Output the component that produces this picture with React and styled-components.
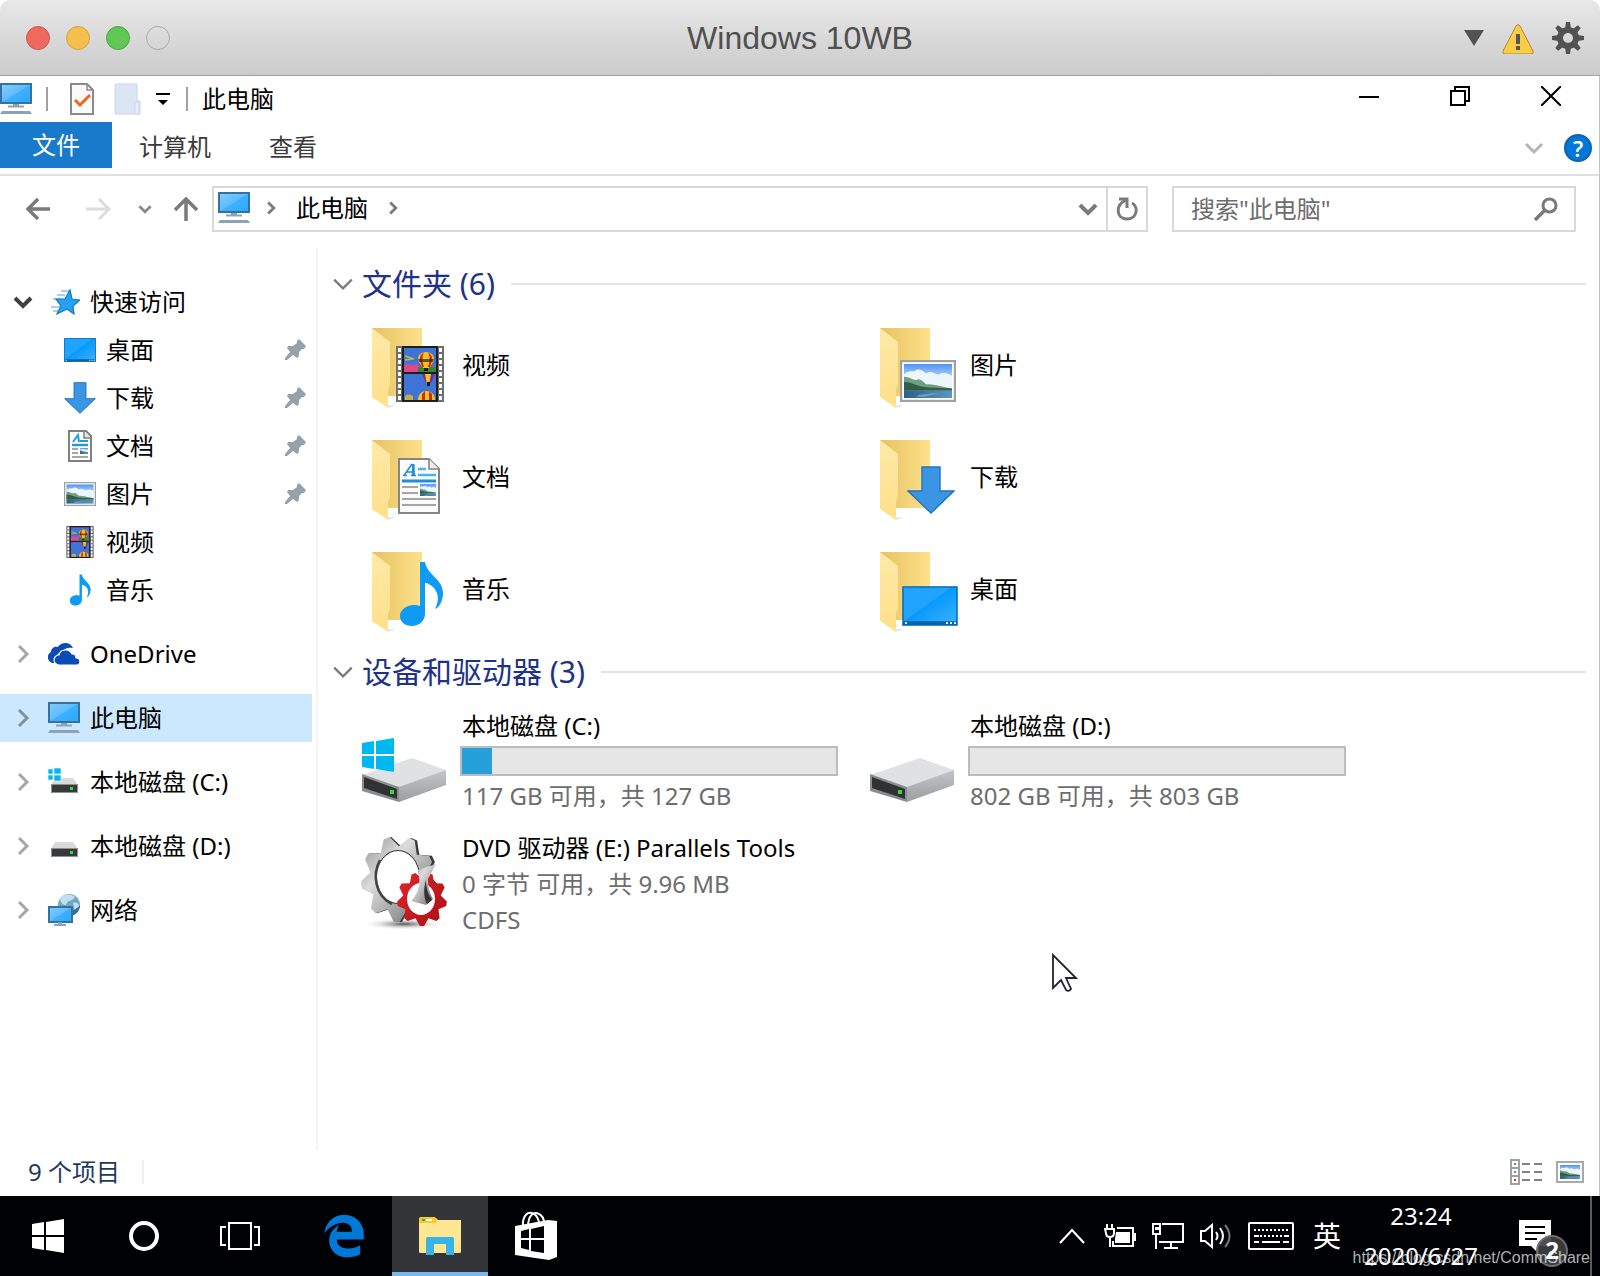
import React from 'react';
import styled, { createGlobalStyle } from 'styled-components';
import { FaEdgeLegacy } from 'react-icons/fa';

const GlobalStyle = createGlobalStyle`
*{
box-sizing:border-box;
}
body{
margin:0;
background:white;
color:#000;
font-family:'Noto Sans','Noto Sans CJK SC',sans-serif;
font-size:24px;
line-height:36px;
}
button,input{
font:inherit;
color:inherit;
}
button{
background:none;
border:none;
padding:0;
}
svg{
display:block;
flex-shrink:0;
}
`;

/* ---------- layout ---------- */
const Screen = styled.div`
display:flex;
flex-direction:column;
min-height:100vh;
`;
const HostBar = styled.header`
display:grid;
grid-template-columns:1fr auto 1fr;
align-items:center;
height:76px;
padding:0 16px;
border-bottom:1px solid #a2a2a2;
border-radius:10px 10px 0 0;
background:linear-gradient(#e8e8e8,#cbcbcb);
`;
const HostTitle = styled.h1`
margin:0;
color:#505050;
font:400 32px/40px 'Liberation Sans',Arial,sans-serif;
`;
const Lights = styled.div`
display:flex;
gap:16px;
padding-left:10px;
`;
const Light = styled.button`
width:24px;
height:24px;
border-radius:50%;
border:1px solid ${(p) => p.$edge};
background:${(p) => p.$fill};
`;
const HostTools = styled.div`
display:flex;
justify-content:flex-end;
align-items:center;
gap:18px;
`;
const Explorer = styled.main`
position:relative;
display:flex;
flex-direction:column;
flex:1;
border-right:1px solid #c3c3c3;
`;
const CaptionBar = styled.div`
display:flex;
height:46px;
padding-right:3px;
`;
const CaptionSeparator = styled.span`
width:2px;
height:24px;
background:#a0a0a0;
`;
const QuickTools = styled.div`
display:flex;
align-items:center;
gap:14px;
flex:1;
`;
const ToolButton = styled.button`
display:flex;
`;
const CaptionButton = styled.button`
display:flex;
justify-content:center;
align-items:center;
width:91px;
height:40px;
`;
const Tabs = styled.nav`
display:flex;
height:54px;
padding-right:7px;
border-bottom:2px solid #dfdfdf;
`;
const Tab = styled.button`
height:46px;
margin-right:${(p) => (p.$active ? '0' : '4px')};
padding:${(p) => (p.$active ? '0 32px' : '4px 27px 0')};
color:${(p) => (p.$active ? 'white' : '#3b3b3b')};
background:${(p) => (p.$active ? '#1979ca' : 'none')};
`;
const TabTools = styled.div`
display:flex;
align-items:center;
gap:20px;
margin-left:auto;
`;
const HelpButton = styled.button`
width:28px;
height:28px;
border:2px solid #0b63b3;
border-radius:50%;
background:#0078d7;
color:white;
font-size:22px;
font-weight:600;
line-height:22px;
`;
const NavRow = styled.div`
display:flex;
align-items:center;
padding:10px 23px 16px 26px;
`;
const Arrows = styled.div`
display:flex;
align-items:center;
gap:22px;
width:186px;
`;
const AddressBar = styled.div`
display:flex;
align-items:center;
flex:1;
height:46px;
border:2px solid #d9d9d9;
`;
const Crumbs = styled.div`
display:flex;
align-items:center;
gap:14px;
flex:1;
padding:0 0 3px 4px;
`;
const Crumb = styled.a`
padding:0 4px;
color:#000;
text-decoration:none;
`;
const RefreshButton = styled.button`
display:flex;
justify-content:center;
align-items:center;
width:40px;
height:42px;
margin-left:8px;
border-left:2px solid #d9d9d9;
`;
const SearchBox = styled.label`
display:flex;
align-items:center;
width:404px;
height:46px;
margin-left:24px;
padding:0 16px 0 17px;
border:2px solid #d9d9d9;
`;
const SearchInput = styled.input`
flex:1;
min-width:0;
padding:0;
border:none;
outline:none;
background:none;
&::placeholder{
color:#6d6d6d;
opacity:1;
}
`;
const Body = styled.div`
display:flex;
flex:1;
`;
const Sidebar = styled.nav`
display:flex;
flex-direction:column;
gap:16px;
width:318px;
flex-shrink:0;
padding-top:30px;
padding-right:4px;
border-right:2px solid #f4f4f4;
`;
const TreeLink = styled.a`
display:flex;
align-items:center;
height:48px;
padding:0 5px 0 ${(p) => (p.$nested ? '64px' : '13px')};
background:${(p) => (p.$selected ? '#cce8ff' : 'none')};
color:#000;
text-decoration:none;
`;
const TreeArrow = styled.span`
display:flex;
justify-content:center;
width:20px;
margin-right:15px;
`;
const TreeLabel = styled.span`
flex:1;
padding-left:10px;
`;
const Content = styled.section`
position:relative;
flex:1;
padding:16px 13px 0 14px;
`;
const GroupTitle = styled.h2`
display:flex;
align-items:center;
gap:16px;
margin:0 0 16px;
font-size:30px;
font-weight:400;
line-height:40px;
color:#1e3287;
&::after{
content:'';
flex:1;
height:2px;
background:#e4e4e4;
}
`;
const GroupToggle = styled.button`
display:flex;
align-items:center;
gap:8px;
`;
const Grid = styled.div`
display:grid;
grid-template-columns:repeat(auto-fill,508px);
gap:16px 0;
margin-bottom:12px;
padding-left:22px;
`;
const Tile = styled.button`
display:flex;
align-items:center;
gap:10px;
text-align:left;
`;
const TileText = styled.span`
display:flex;
flex-direction:column;
`;
const TileName = styled.span`
padding:${(p) => (p.$folder ? '0 0 6px 2px' : '0 0 0 2px')};
`;
const TileInfo = styled.span`
padding-left:2px;
color:#6d6d6d;
`;
const Gauge = styled.span`
width:378px;
height:30px;
margin:2px 0;
border:2px solid #bcbcbc;
background:#e6e6e6;
`;
const GaugeFill = styled.span`
display:block;
height:100%;
background:#26a0da;
`;
const Pointer = styled.div`
position:absolute;
left:734px;
top:705px;
`;
const StatusBar = styled.footer`
display:flex;
justify-content:space-between;
align-items:center;
height:46px;
padding:0 15px 2px 28px;
color:#1f3a5c;
`;
const ItemCount = styled.span`
padding-right:22px;
border-right:2px solid #f0f0f0;
line-height:24px;
`;
const ViewButtons = styled.div`
display:flex;
gap:12px;
`;
const Taskbar = styled.footer`
position:relative;
display:flex;
justify-content:space-between;
height:80px;
background:#000105;
color:white;
`;
const TaskGroup = styled.div`
display:flex;
`;
const TaskButton = styled.button`
display:flex;
justify-content:center;
align-items:center;
width:96px;
margin-left:${(p) => (p.$first ? '8px' : '0')};
background:${(p) => (p.$active ? '#343538' : 'none')};
box-shadow:${(p) => (p.$active ? 'inset 0 -4px #76b9ed' : 'none')};
`;
const TrayButton = styled.button`
display:flex;
justify-content:center;
align-items:center;
width:${(p) => p.$width || 48}px;
font-size:28px;
`;
const NoticeButton = styled(TrayButton)`
padding:16px 0 0 8px;
`;
const Clock = styled.time`
width:138px;
line-height:40px;
text-align:center;
`;
const ShowDesktop = styled.button`
width:10px;
border-left:2px solid #5a5b5e;
`;
const Watermark = styled.a`
position:absolute;
right:10px;
bottom:8px;
color:rgba(255,255,255,.7);
font:16px/20px 'Liberation Sans',Arial,sans-serif;
text-decoration:none;
`;

/* ---------- icons ---------- */
const Chevron = ({ dir = 'down', w = 18, color = '#6d6d6d', stroke = 3 }) => {
  const turn = { down: 0, right: -90, up: 180 }[dir];
  return (
    <svg width={w} height={w} viewBox="0 0 20 20">
      <path d="M2 6l8 8 8-8" fill="none" stroke={color} strokeWidth={stroke} transform={`rotate(${turn} 10 10)`} />
    </svg>
  );
};

const Monitor = () => (
  <svg width="32" height="32" viewBox="0 0 32 32">
    <defs>
      <linearGradient id="screen" x1="0" y1="0" x2="1" y2="1">
        <stop offset="0" stopColor="#86ccff" />
        <stop offset=".5" stopColor="#5cbcff" />
        <stop offset=".5" stopColor="#3fb0ff" />
        <stop offset="1" stopColor="#2ba8fc" />
      </linearGradient>
    </defs>
    <rect x="1" y="1" width="30" height="19" fill="url(#screen)" stroke="#36739c" strokeWidth="2" />
    <path d="M13 21h6v2h-6zM8 22.500h16v2H8z" fill="#8ba3b8" />
    <path d="M2 28h28l2 3H0z" fill="#8fa2b5" />
  </svg>
);

const DesktopArt = (props) => (
  <svg viewBox="0 0 56 42" preserveAspectRatio="none" {...props}>
    <defs>
      <linearGradient id="desk" x1="0" y1="0" x2="1" y2="1">
        <stop offset="0" stopColor="#1fa4ff" />
        <stop offset=".45" stopColor="#1fa4ff" />
        <stop offset=".46" stopColor="#0898fc" />
        <stop offset="1" stopColor="#3cb4ff" />
      </linearGradient>
    </defs>
    <rect x="1" y="1" width="54" height="40" fill="url(#desk)" stroke="#0b6fb8" strokeWidth="1.6" />
    <path d="M1 37h54v4H1z" fill="#0a63a5" />
    <path d="M3 38h2v2H3zM44 38h2v2h-2zM48 38h2v2h-2zM52 38h2v2h-2z" fill="white" />
  </svg>
);

const ArrowArt = (props) => (
  <svg viewBox="0 0 48 48" {...props}>
    <path d="M15 1h18v24h14L24 47 1 25h14z" fill="#3a96e4" stroke="#1f74bd" strokeWidth="1.4" />
  </svg>
);

const LandscapeArt = (props) => (
  <svg viewBox="0 0 46 32" preserveAspectRatio="none" {...props}>
    <defs>
      <linearGradient id="sky" x1="0" y1="0" x2="0" y2="1">
        <stop offset="0" stopColor="#4f92f5" />
        <stop offset=".5" stopColor="#cfe6fb" />
      </linearGradient>
      <linearGradient id="lake" x1="0" y1="0" x2="1" y2="0">
        <stop offset="0" stopColor="#2f5f86" />
        <stop offset="1" stopColor="#5b96c6" />
      </linearGradient>
    </defs>
    <path d="M0 0h46v32H0z" fill="url(#sky)" />
    <path d="M0 10c4-4 8-3 10-3 4-4 9 0 11 2 6-4 8 1 12 1 5-3 9-1 13 1v14H0z" fill="#eef6fd" />
    <path d="M0 12c5 0 8 3 12 3 3-2 6 1 9 4 8 0 14 2 25 4v3H0z" fill="#6f9f7c" />
    <path d="M0 17c8 0 14 5 24 5l22 1v2H0z" fill="#2f6045" />
    <path d="M0 25h46v7H0z" fill="url(#lake)" />
    <path d="M14 29l20-2-14 4h-8z" fill="#86b4d3" opacity=".6" />
  </svg>
);

const PictureArt = (props) => (
  <svg viewBox="0 0 56 42" {...props}>
    <rect x="1" y="1" width="54" height="40" fill="white" stroke="#a0a0a0" strokeWidth="2.400" />
    <LandscapeArt x="4" y="4" width="48" height="34" />
  </svg>
);

const DocumentArt = (props) => (
  <svg viewBox="0 0 42 56" {...props}>
    <path d="M1 1h30l10 10v44H1z" fill="#fbfbfb" stroke="#858585" strokeWidth="2" />
    <path d="M31 1v10h10" fill="#eee" stroke="#858585" strokeWidth="1.6" />
    <path d="M6 17.500L14 6M8 14h8M5 17.500h4M13 17.500h5" fill="none" stroke="#1f8fd8" strokeWidth="1.6" />
    <path d="M14 6h2.500l.5 11.500h-3z" fill="#1f8fd8" />
    <path d="M20 11h8M20 17h18" stroke="#4cb4ea" strokeWidth="2.400" />
    <path d="M4 23h34" stroke="#1f8fd8" strokeWidth="3" />
    <path d="M4 29h16M4 35h16M4 41h34M4 47h34" stroke="#a6a6a6" strokeWidth="2.200" />
    <LandscapeArt x="22" y="26" width="16" height="12" />
  </svg>
);

// simplified page for the 32px tree icon
const SmallDocument = () => (
  <svg width="32" height="32" viewBox="0 0 32 32">
    <path d="M5 1h17l5 5v25H5z" fill="white" stroke="#7f7f7f" strokeWidth="2" />
    <path d="M20 1v7h7" fill="#e6e6e6" stroke="#7f7f7f" strokeWidth="1.500" />
    <path d="M9 12l5-7 1 7M16 11h8" fill="none" stroke="#1f9be0" strokeWidth="2" />
    <path d="M8 15h16" stroke="#1f9be0" strokeWidth="2.400" />
    <path d="M8 19h6M8 23h6M8 27h16" stroke="#a6a6a6" strokeWidth="1.800" />
    <LandscapeArt x="16" y="18" width="8" height="6" />
  </svg>
);

const NoteArt = (props) => (
  <svg viewBox="0 0 44 66" {...props}>
    <path
      d="M21 1h5c2 13 18 17 18 31 0 8-4 15-8 16 3-6 5-14-1-21-3-3-6-5-9-5v31c0 7-6 12-13 12S1 61 1 55s6-11 14-11c3 0 4 0 6 1z"
      fill="#0d9bf5"
    />
  </svg>
);

const Balloon = ({ x, y }) => (
  <g transform={`translate(${x} ${y})`}>
    <path d="M0-8c5 0 8 3 8 7 0 4-4 6-5 9h-6c-1-3-5-5-5-9 0-4 3-7 8-7z" fill="#f3c41f" />
    <path d="M-3-7c-5 4-3 8-1 14h2c-2-6-2-10 0-15zM3-7c5 4 3 8 1 14H2c2-6 2-10 0-15z" fill="#cf2a1c" />
    <path d="M-8-1h16l-1 3H-7z" fill="#2b2320" opacity=".7" />
    <path d="M-2 8h4v3h-4z" fill="#241a12" />
  </g>
);

const FilmArt = (props) => (
  <svg viewBox="0 0 48 56" {...props}>
    <path d="M0 0h48v56H0z" fill="#6f6f6f" />
    <path d="M6 0h36v56H6z" fill="#1c1c1c" />
    {[2, 8, 14, 20, 26, 32, 38, 44, 50].map((y) => (
      <path key={y} d={`M2 ${y}h3v4H2zM43 ${y}h3v4h-3z`} fill="white" />
    ))}
    <path d="M8 2h32v24H8zM8 28h32v26H8z" fill="#3f73d6" />
    <path d="M8 20c4-5 8 1 12-2 4 4 6 1 8 3l12-1v6H8z" fill="#e0468a" />
    <path d="M22 21h18v5H22z" fill="#2f8b3a" />
    <path d="M9 10l9 3M9 14l8-1" stroke="#b9b84e" strokeWidth="1.600" />
    <Balloon x={30} y={14} />
    <path d="M26 28h13l-4 9h-5z" fill="#7c2b9c" />
    <path d="M29 28h6l-2 11h-2z" fill="#f2c21d" />
    <path d="M31 36h3v4h-3z" fill="#1c1c1c" />
    <path d="M22 54c0-12 17-12 17 0z" fill="#f3c41f" />
    <path d="M26 54v-6l3-3v9zM33 54v-9l3 3v6z" fill="#cf2a1c" />
    <path d="M9 50c4-3 6-1 8 0v4H9z" fill="#c2b04a" />
  </svg>
);

const Folder = ({ children }) => (
  <svg width="96" height="96" viewBox="-8 0 96 96">
    <defs>
      <linearGradient id="back" x1="0" y1="0" x2="1" y2="0">
        <stop offset="0" stopColor="#e6c263" />
        <stop offset="1" stopColor="#fde18a" />
      </linearGradient>
      <linearGradient id="flap" x1="0" y1="0" x2="0" y2="1">
        <stop offset="0" stopColor="#ffe9a8" />
        <stop offset="1" stopColor="#ffe08a" />
      </linearGradient>
    </defs>
    <path d="M26 88l6-2v-1h-6z" fill="#e8e8e8" />
    <path d="M10 8h50v68H20z" fill="url(#back)" />
    <path d="M10 8l18 14v43l-2 4v19L10 77z" fill="url(#flap)" />
    {children}
  </svg>
);

const DriveBody = ({ children }) => (
  <svg width="96" height="96" viewBox="0 0 96 96">
    <defs>
      <linearGradient id="side" x1="0" y1="0" x2="0" y2="1">
        <stop offset="0" stopColor="#c4c5c8" />
        <stop offset="1" stopColor="#9c9da0" />
      </linearGradient>
    </defs>
    <path d="M8 62l50-17 34 12-47 18z" fill="#e0e1e5" />
    <path d="M45 74l47-17v15L45 89z" fill="url(#side)" />
    <path d="M8 61l37 13v15L8 78z" fill="#8b8c8e" />
    <path d="M10 64l33 12v10L10 75z" fill="#303132" />
    <path d="M36 77h4v4h-4z" fill="#2be02b" />
    {children}
  </svg>
);

const WinFlag = (props) => (
  <svg viewBox="0 0 32 34" {...props}>
    <path d="M0 5l12-2v13H0zM14 3l18-3v16H14zM0 18h12v13L0 29zM14 18h18v16l-18-3z" fill={props.color} />
  </svg>
);

const SmallDrive = ({ system }) => (
  <svg width="32" height="32" viewBox="0 0 32 32">
    <path d="M7 12h18l5 7H3z" fill="#d9dadd" />
    <path d="M3 18h27v9H3z" fill="#8f9093" />
    <path d="M4 19h25v7H4z" fill="#38393a" />
    <path d="M22 21h3v3h-3z" fill="#2be02b" />
    {system && <path d="M0 3h5v5H0zM6 2h7v6H6zM0 9h5v5H0zM6 9h7v6H6z" fill="#00b8f0" stroke="white" strokeWidth=".6" />}
  </svg>
);

function cog(cx, cy, rx, ry, teeth, offset) {
  const points = [];
  const step = (Math.PI * 2) / teeth;
  for (let i = 0; i < teeth; i++) {
    const a = (offset * Math.PI) / 180 + i * step;
    [[-0.5, 0.76], [-0.12, 1], [0.12, 1]].forEach(([d, k]) => {
      points.push(`${(cx + Math.cos(a + d * step) * rx * k).toFixed(1)} ${(cy + Math.sin(a + d * step) * ry * k).toFixed(1)}`);
    });
  }
  return `M${points.join('L')}z`;
}
const ring = (cx, cy, rx, ry) => `M${cx - rx} ${cy}a${rx} ${ry} 0 1 0 ${rx * 2} 0a${rx} ${ry} 0 1 0 ${-rx * 2} 0z`;

const ParallelsDisc = () => (
  <svg width="96" height="96" viewBox="0 0 96 96">
    <defs>
      <linearGradient id="steel" x1="0" y1="0" x2="1" y2="1">
        <stop offset="0" stopColor="#8e8e8e" />
        <stop offset=".35" stopColor="#dcdcdc" />
        <stop offset=".7" stopColor="#9b9b9b" />
        <stop offset="1" stopColor="#555" />
      </linearGradient>
      <radialGradient id="ground">
        <stop offset="0" stopColor="#555" />
        <stop offset="1" stopColor="#fff" stopOpacity="0" />
      </radialGradient>
      <linearGradient id="red" x1="0" y1="0" x2="1" y2="1">
        <stop offset="0" stopColor="#e2262a" />
        <stop offset="1" stopColor="#a80f14" />
      </linearGradient>
    </defs>
    <ellipse cx="50" cy="88" rx="42" ry="6" fill="url(#ground)" />
    <path d={cog(46, 43, 38, 43, 9, -108) + ring(44, 41, 21, 26)} fill="#3a3a3a" fillRule="evenodd" />
    <path d={cog(44, 43, 37, 43, 9, -108) + ring(44, 41, 22, 27)} fill="url(#steel)" fillRule="evenodd" />
    <path d="M26 24c-8 14-5 36 12 44" fill="none" stroke="#444" strokeWidth="2.500" />
    <path d={cog(68, 63, 25, 27, 9, -110)} fill="url(#red)" />
    <ellipse cx="67" cy="63" rx="14" ry="16" fill="white" />
    <path d="M64 34l18-6-8 15c0 8 2 15 5 20l-7 6-15-4c8-8 10-18 7-31z" fill="url(#steel)" />
    <path d="M72 44c0 8 2 14 6 20l-5 4c-3-6-4-14-1-24z" fill="#333" />
  </svg>
);

const Star = () => (
  <svg width="32" height="32" viewBox="0 0 32 32">
    <path d="M13 5h8M9 9h8M5 13h8M3 21h9M5 25h6" stroke="#7fc6f5" strokeWidth="1.600" />
    <path
      d="M22 4l2 9 8 1-7 6 1 8-7-5-10 5 4-8-5-7h9z"
      fill="#24a3f5"
      stroke="#1878bd"
      strokeWidth="1.200"
    />
  </svg>
);

const Cloud = () => (
  <svg width="32" height="32" viewBox="0 0 32 32">
    <path d="M4 25a6 6 0 0 1-1-11c0-4 4-6 7-5 3-5 12-6 15 1-6-1-9 1-11 4-5 1-8 6-6 11z" fill="#0b4bb3" />
    <path d="M11 27a5 5 0 0 1 0-10c1-6 10-7 13-1 3 0 4 1 4 4 5 0 5 7 1 7z" fill="#0b4bb3" stroke="white" strokeWidth="1.200" />
  </svg>
);

const NetworkGlobe = () => (
  <svg width="32" height="32" viewBox="0 0 32 32">
    <circle cx="21" cy="11" r="11" fill="#6fa9c6" />
    <path d="M12 5c4-6 12-5 15-2-2 4-8 3-9 8-2 0-5-1-6-6zM25 9c3-1 5 0 6 2 0 4-2 6-4 7z" fill="#c2dfeb" />
    <path d="M22 22c6-1 10-5 10-11-3 4-7 6-10 5z" fill="#2f7390" />
    <rect x="1" y="13" width="23" height="15" fill="url(#screen)" stroke="#36739c" strokeWidth="2" />
    <path d="M10 28h4v2h-4zM6 30h12v2H6z" fill="#8ba3b8" />
  </svg>
);

const Pin = () => (
  <svg width="22" height="22" viewBox="0 0 22 22">
    <path d="M14 0l7 7-2 3h-2l-3 3v4l-2 2-4-3-6 5H0v-2l5-6-3-4 1-2h5l4-3V2z" fill="#96a1aa" />
  </svg>
);

const HostIcons = () => (
  <>
    <svg width="20" height="16" viewBox="0 0 20 16">
      <path d="M0 0h20L10 16z" fill="#525252" />
    </svg>
    <svg width="32" height="32" viewBox="0 0 32 32">
      <path d="M14 4q2-3 4 0l13 25q1 3-2 3H3q-3 0-2-3z" fill="#f9cd45" stroke="#b9803a" />
      <path d="M14 12h4v10h-4zM14 24h4v4h-4z" fill="#555" />
    </svg>
    <svg width="32" height="32" viewBox="0 0 32 32">
      <circle cx="16" cy="16" r="8" fill="none" stroke="#525252" strokeWidth="6" />
      {[0, 45, 90, 135, 180, 225, 270, 315].map((a) => (
        <path key={a} d="M14 0h4l1 7h-6z" fill="#525252" transform={`rotate(${a} 16 16)`} />
      ))}
    </svg>
  </>
);

/* ---------- data ---------- */
const quickAccess = [
  { name: '桌面', icon: <DesktopArt width="32" height="24" />, pinned: true },
  { name: '下载', icon: <ArrowArt width="32" height="32" />, pinned: true },
  { name: '文档', icon: <SmallDocument />, pinned: true },
  { name: '图片', icon: <PictureArt width="32" height="24" />, pinned: true },
  { name: '视频', icon: <FilmArt width="32" height="32" /> },
  { name: '音乐', icon: <NoteArt width="32" height="32" /> },
];
const places = [
  { name: 'OneDrive', icon: <Cloud /> },
  { name: '此电脑', icon: <Monitor />, selected: true },
  { name: '本地磁盘 (C:)', icon: <SmallDrive system /> },
  { name: '本地磁盘 (D:)', icon: <SmallDrive /> },
  { name: '网络', icon: <NetworkGlobe /> },
];
const folders = [
  { name: '视频', art: <FilmArt x="34" y="26" width="48" height="56" /> },
  { name: '图片', art: <PictureArt x="30" y="40" width="56" height="42" /> },
  { name: '文档', art: <DocumentArt x="36" y="26" width="42" height="56" /> },
  { name: '下载', art: <ArrowArt x="37" y="34" width="48" height="48" /> },
  { name: '音乐', art: <NoteArt x="37" y="17" width="44" height="66" /> },
  { name: '桌面', art: <DesktopArt x="32" y="42" width="56" height="40" /> },
];
const drives = [
  {
    name: '本地磁盘 (C:)',
    icon: (
      <DriveBody>
        <WinFlag x="8" y="25" width="32" height="34" color="#00b8f0" />
      </DriveBody>
    ),
    used: 8,
    info: ['117 GB 可用，共 127 GB'],
  },
  { name: '本地磁盘 (D:)', icon: <DriveBody />, used: 0, info: ['802 GB 可用，共 803 GB'] },
  { name: 'DVD 驱动器 (E:) Parallels Tools', icon: <ParallelsDisc />, info: ['0 字节 可用，共 9.96 MB', 'CDFS'] },
];

/* ---------- parts ---------- */
function Caption() {
  return (
    <CaptionBar>
      <QuickTools>
        <Monitor />
        <CaptionSeparator />
        <ToolButton aria-label="属性">
          <svg width="38" height="32" viewBox="-8 0 38 32">
            <path d="M1 1h16l6 6v24H1z" fill="#fafafa" stroke="#8a8a8a" strokeWidth="2" />
            <path d="M17 1v6h6" fill="none" stroke="#8a8a8a" strokeWidth="1.500" />
            <path d="M5 17l5 5 10-10" fill="none" stroke="#f0641e" strokeWidth="3" />
          </svg>
        </ToolButton>
        <ToolButton aria-label="新建文件夹">
          <svg width="28" height="32" viewBox="0 0 28 32">
            <path d="M1 1h22v17h3v13H1z" fill="#dbe5f4" stroke="#c9d6ea" />
            <path d="M21 19h4v12h-4z" fill="#e8eef8" stroke="#c9d6ea" />
          </svg>
        </ToolButton>
        <ToolButton aria-label="自定义快速访问工具栏">
          <svg width="16" height="12" viewBox="0 0 16 12">
            <path d="M0 0h14v2H0zM2 7h10l-5 5z" fill="#000" />
          </svg>
        </ToolButton>
        <CaptionSeparator />
        <span>此电脑</span>
      </QuickTools>
      <CaptionButton aria-label="最小化">
        <svg width="20" height="20" viewBox="0 0 20 20">
          <path d="M0 11h20" stroke="#000" strokeWidth="2" />
        </svg>
      </CaptionButton>
      <CaptionButton aria-label="还原">
        <svg width="20" height="20" viewBox="0 0 20 20">
          <path d="M1 5h14v14H1zM5 5V1h14v14h-4" fill="none" stroke="#000" strokeWidth="2" />
        </svg>
      </CaptionButton>
      <CaptionButton aria-label="关闭">
        <svg width="20" height="20" viewBox="0 0 20 20">
          <path d="M0 0l20 20M20 0L0 20" stroke="#000" strokeWidth="2" />
        </svg>
      </CaptionButton>
    </CaptionBar>
  );
}

function Navigation() {
  return (
    <NavRow>
      <Arrows>
        <ToolButton aria-label="后退">
          <svg width="26" height="24" viewBox="0 0 26 24">
            <path d="M24 12H3M12 2L2 12l10 10" fill="none" stroke="#7a7a7a" strokeWidth="3.500" />
          </svg>
        </ToolButton>
        <ToolButton aria-label="前进">
          <svg width="42" height="24" viewBox="-12 0 42 24">
            <path d="M0 12h22M13 2l10 10-10 10" fill="none" stroke="#dcdcdc" strokeWidth="3" />
          </svg>
        </ToolButton>
        <ToolButton aria-label="最近浏览的位置">
          <Chevron w={14} stroke={4} color="#8a8a8a" />
        </ToolButton>
        <ToolButton aria-label="上移到桌面">
          <svg width="24" height="24" viewBox="0 0 24 24">
            <path d="M12 24V3M1 13L12 2l11 11" fill="none" stroke="#7a7a7a" strokeWidth="3.500" />
          </svg>
        </ToolButton>
      </Arrows>
      <AddressBar>
        <Crumbs>
          <Monitor />
          <Chevron dir="right" w={14} stroke={4} color="#7a7a7a" />
          <Crumb href="#pc">此电脑</Crumb>
          <Chevron dir="right" w={14} stroke={4} color="#7a7a7a" />
        </Crumbs>
        <ToolButton aria-label="以前的位置">
          <Chevron w={20} stroke={4} color="#7a7a7a" />
        </ToolButton>
        <RefreshButton aria-label="刷新">
          <svg width="22" height="24" viewBox="0 0 22 24">
            <path d="M10 3C-1 8 0 22 11 22c10 0 12-12 5-16" fill="none" stroke="#7a7a7a" strokeWidth="3" />
            <path d="M3 2h8v9" fill="none" stroke="#7a7a7a" strokeWidth="3" />
          </svg>
        </RefreshButton>
      </AddressBar>
      <SearchBox>
        <SearchInput type="search" aria-label="搜索" placeholder={'搜索"此电脑"'} />
        <svg width="24" height="24" viewBox="0 0 24 24">
          <path d="M1 23l10-10" stroke="#7a7a7a" strokeWidth="3.500" />
          <circle cx="15.500" cy="8.500" r="6.500" fill="none" stroke="#7a7a7a" strokeWidth="3" />
        </svg>
      </SearchBox>
    </NavRow>
  );
}

function Tree() {
  return (
    <Sidebar>
      <div>
        <TreeLink href="#quick">
          <TreeArrow>
            <Chevron w={20} stroke={4} color="#404040" />
          </TreeArrow>
          <Star />
          <TreeLabel>快速访问</TreeLabel>
        </TreeLink>
        {quickAccess.map((item) => (
          <TreeLink $nested href="#quick" key={item.name}>
            {item.icon}
            <TreeLabel>{item.name}</TreeLabel>
            {item.pinned && <Pin />}
          </TreeLink>
        ))}
      </div>
      {places.map((item) => (
        <TreeLink href="#place" key={item.name} $selected={item.selected}>
          <TreeArrow>
            <Chevron dir="right" w={20} stroke={3} color={item.selected ? '#7d929f' : '#a6a6a6'} />
          </TreeArrow>
          {item.icon}
          <TreeLabel>{item.name}</TreeLabel>
        </TreeLink>
      ))}
    </Sidebar>
  );
}

function Group({ title, children }) {
  return (
    <>
      <GroupTitle>
        <GroupToggle>
          <Chevron w={22} stroke={2} color="#7a7a7a" />
          {title}
        </GroupToggle>
      </GroupTitle>
      <Grid>{children}</Grid>
    </>
  );
}

function Tray() {
  return (
    <TaskGroup>
      <TrayButton aria-label="显示隐藏的图标">
        <svg width="26" height="16" viewBox="0 0 26 16">
          <path d="M1 15L13 2l12 13" fill="none" stroke="white" strokeWidth="2.200" />
        </svg>
      </TrayButton>
      <TrayButton aria-label="电源">
        <svg width="32" height="24" viewBox="0 0 32 24">
          <path d="M3 0v5M8 0v5M1 5h9v4q0 4-4 4t-4-4zM6 13v10" fill="none" stroke="white" strokeWidth="2" />
          <path d="M13 4h16v18H9v-5M31 9v8" fill="none" stroke="white" strokeWidth="2" />
          <path d="M12 8h14v11H11v-4z" fill="white" />
        </svg>
      </TrayButton>
      <TrayButton aria-label="网络">
        <svg width="32" height="28" viewBox="0 0 32 28">
          <path d="M10 2h21v18H7M1 2h7v10H1zM4 12v15M19 20v6M12 26h14" fill="none" stroke="white" strokeWidth="2" />
          <path d="M3 5h4v3H3z" fill="white" />
        </svg>
      </TrayButton>
      <TrayButton aria-label="音量">
        <svg width="32" height="26" viewBox="0 0 32 26">
          <path d="M1 8h4l7-6v22l-7-6H1z" fill="none" stroke="white" strokeWidth="2" />
          <path d="M16 9q3 4 0 8M20 5q6 8 0 16" fill="none" stroke="white" strokeWidth="2" />
          <path d="M25 2q9 11 0 22" fill="none" stroke="#777" strokeWidth="2" />
        </svg>
      </TrayButton>
      <TrayButton $width={62} aria-label="触摸键盘">
        <svg width="46" height="28" viewBox="0 0 46 28">
          <rect x="1" y="1" width="44" height="26" rx="1" fill="none" stroke="white" strokeWidth="2" />
          <path d="M6 8h35M12 14h23" stroke="white" strokeWidth="2" strokeDasharray="2 2" />
          <path d="M6 14h5M36 14h5M6 20h5M14 20h18M35 20h6" stroke="white" strokeWidth="2" />
        </svg>
      </TrayButton>
      <TrayButton $width={50}>英</TrayButton>
      <Clock>
        23:24
        <br />
        2020/6/27
      </Clock>
      <NoticeButton $width={100} aria-label="2 个新通知">
        <svg width="50" height="52" viewBox="0 0 50 52">
          <path d="M0 2h32v26H20v8l-8-8H0z" fill="white" />
          <path d="M6 9h20M6 15h20M6 21h12" stroke="#000" strokeWidth="2" />
          <circle cx="33" cy="33" r="15" fill="#3f4043" fillOpacity=".92" stroke="#6d6e70" strokeWidth="2" />
          <text x="33" y="41" textAnchor="middle" fontSize="24" fontWeight="700" fill="white">2</text>
        </svg>
      </NoticeButton>
      <ShowDesktop aria-label="显示桌面" />
    </TaskGroup>
  );
}

function App() {
  return (
    <Screen>
      <GlobalStyle />
      <HostBar>
        <Lights>
          <Light $fill="#ee6a5e" $edge="#d5544a" aria-label="Close" />
          <Light $fill="#f5bf4f" $edge="#d8a03c" aria-label="Minimize" />
          <Light $fill="#61c654" $edge="#4ba73f" aria-label="Zoom" />
          <Light $fill="transparent" $edge="#a9a9a9" aria-label="Coherence" />
        </Lights>
        <HostTitle>Windows 10WB</HostTitle>
        <HostTools>
          <HostIcons />
        </HostTools>
      </HostBar>
      <Explorer>
        <Caption />
        <Tabs>
          <Tab $active>文件</Tab>
          <Tab>计算机</Tab>
          <Tab>查看</Tab>
          <TabTools>
            <Chevron w={20} stroke={3} color="#b5b5b5" />
            <HelpButton aria-label="帮助">?</HelpButton>
          </TabTools>
        </Tabs>
        <Navigation />
        <Body>
          <Tree />
          <Content>
            <Group title="文件夹 (6)">
              {folders.map((item) => (
                <Tile key={item.name}>
                  <Folder>{item.art}</Folder>
                  <TileName $folder>{item.name}</TileName>
                </Tile>
              ))}
            </Group>
            <Group title="设备和驱动器 (3)">
              {drives.map((item) => (
                <Tile key={item.name}>
                  {item.icon}
                  <TileText>
                    <TileName>{item.name}</TileName>
                    {item.used !== undefined && (
                      <Gauge>
                        <GaugeFill style={{ width: `${item.used}%` }} />
                      </Gauge>
                    )}
                    {item.info.map((line) => (
                      <TileInfo key={line}>{line}</TileInfo>
                    ))}
                  </TileText>
                </Tile>
              ))}
            </Group>
            <Pointer>
              <svg width="26" height="40" viewBox="0 0 26 40">
                <path d="M1 2v33l8-8 5 10q3 2 5-1l-5-11h10z" fill="white" stroke="#23232b" strokeWidth="1.800" />
              </svg>
            </Pointer>
          </Content>
        </Body>
        <StatusBar>
          <ItemCount>9 个项目</ItemCount>
          <ViewButtons>
            <ToolButton aria-label="详细信息">
              <svg width="34" height="26" viewBox="0 0 34 26">
                <path d="M1 1h8v24H1zM1 9h8M1 17h8" fill="none" stroke="#a0a0a0" strokeWidth="2" />
                <path d="M12 5h8M24 5h8M12 13h8M24 13h8M12 21h8M24 21h8" stroke="#808080" strokeWidth="2" />
                <path d="M4 4h2v2H4z" fill="#4a9a80" />
                <path d="M4 12h2v2H4z" fill="#3f8cf0" />
                <path d="M4 20h2v2H4z" fill="#e03030" />
              </svg>
            </ToolButton>
            <ToolButton aria-label="大图标">
              <svg width="28" height="26" viewBox="0 0 28 26">
                <rect x="1" y="3" width="26" height="20" fill="white" stroke="#a9a9a9" strokeWidth="2" />
                <LandscapeArt x="4" y="6" width="20" height="14" />
              </svg>
            </ToolButton>
          </ViewButtons>
        </StatusBar>
      </Explorer>
      <Taskbar>
        <TaskGroup>
          <TaskButton aria-label="开始">
            <WinFlag width="32" height="34" color="white" />
          </TaskButton>
          <TaskButton aria-label="Cortana">
            <svg width="32" height="32" viewBox="0 0 32 32">
              <circle cx="16" cy="16" r="13" fill="none" stroke="white" strokeWidth="4" />
            </svg>
          </TaskButton>
          <TaskButton aria-label="任务视图">
            <svg width="40" height="28" viewBox="0 0 40 28">
              <path d="M9 1h22v26H9zM6 5H1v18h5M34 5h5v18h-5" fill="none" stroke="white" strokeWidth="2" />
            </svg>
          </TaskButton>
          <TaskButton $first aria-label="Microsoft Edge">
            <FaEdgeLegacy size={44} color="#0078d7" />
          </TaskButton>
          <TaskButton $active aria-label="文件资源管理器">
            <svg width="44" height="38" viewBox="0 0 44 38">
              <path d="M1 1h17l2 2h23v32q0 1-2 1H3q-2 0-2-1z" fill="#ffe692" />
              <path d="M1 2q0-2 2-2h14l2 4-1 2H1z" fill="#fbc926" />
              <path d="M4 2h3v2H4z" fill="#19a59a" />
              <path d="M8 2h6v2H8z" fill="white" />
              <path d="M8 38V22q0-2 2-2h24q2 0 2 2v16h-8V27H16v11z" fill="#35b4e8" />
            </svg>
          </TaskButton>
          <TaskButton aria-label="应用商店">
            <svg width="44" height="50" viewBox="0 0 44 50">
              <path d="M9 17C8 5 13 1 18 2c4 1 6 5 7 9M14 16C14 4 20 0 25 3c4 2 5 5 5 9" fill="none" stroke="white" strokeWidth="2" />
              <path d="M1 15l33-6 9 1v36l-8 3L1 44z" fill="white" />
              <path d="M7 20l8-2v9H7zM17 18l13-3v12H17zM7 29h8v10l-8-2zM17 29h13v13l-13-2z" fill="#000105" />
            </svg>
          </TaskButton>
        </TaskGroup>
        <Tray />
        <Watermark href="#blog">https://blog.csdn.net/CommShare</Watermark>
      </Taskbar>
    </Screen>
  );
}

export default App;
